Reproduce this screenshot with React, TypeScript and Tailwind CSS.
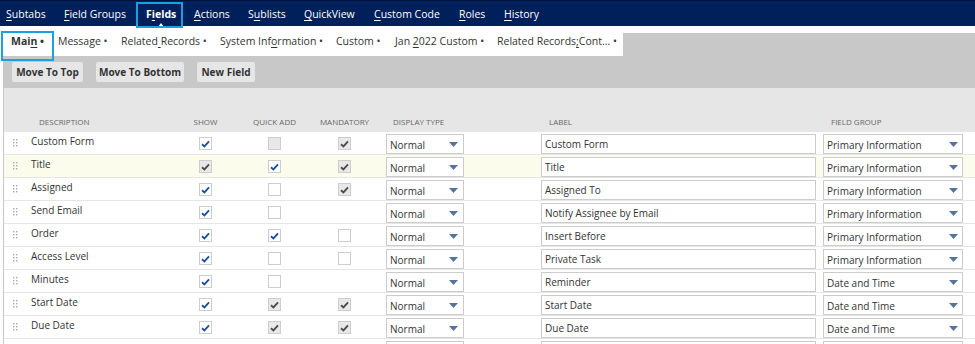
import React from 'react';

type CB = 'blue' | 'gray' | 'dis' | 'empty' | 'none';

function Check({ v }: { v: CB }) {
  if (v === 'none') return <div className="w-[13px] h-[13px]" />;
  const bg = v === 'gray' || v === 'dis' ? 'bg-[#e8e8e8]' : 'bg-white';
  return (
    <div className={`w-[13px] h-[13px] border border-[#cdcdcd] ${bg} flex items-center justify-center`}>
      {(v === 'blue' || v === 'gray') && (
        <svg width="9" height="8" viewBox="0 0 9 8">
          <path
            d="M1 4.3 L3.4 6.4 L8 1.4"
            fill="none"
            stroke={v === 'blue' ? '#1d4d9b' : '#4a4a4a'}
            strokeWidth="1.8"
          />
        </svg>
      )}
    </div>
  );
}

function Arrow() {
  return (
    <svg width="9" height="5" viewBox="0 0 9 5">
      <path d="M0 0 H9 L4.5 5 Z" fill="#56739c" />
    </svg>
  );
}

function Select({ text, wide }: { text: string; wide?: boolean }) {
  return (
    <div
      className={`h-[20px] border border-[#cccccc] bg-white flex items-center justify-between pl-[3px] ${
        wide ? 'w-[140px] pr-[4px]' : 'w-[78px] pr-[5px]'
      }`}
    >
      <span className="text-[10px] leading-[12px] text-[#333] pt-[1px]">{text}</span>
      <Arrow />
    </div>
  );
}

function Handle() {
  return (
    <svg width="5" height="8" viewBox="0 0 5 8">
      {[0, 3].map((x) =>
        [0, 3, 6].map((y) => <rect key={`${x}-${y}`} x={x} y={y} width="1.4" height="1.4" fill="#a8a8a8" />)
      )}
    </svg>
  );
}

type Row = {
  d: string;
  s: CB;
  q: CB;
  m: CB;
  label: string;
  fg: string;
  hl?: boolean;
  sel?: string;
};

const rows: Row[] = [
  { d: 'Custom Form', s: 'blue', q: 'dis', m: 'gray', label: 'Custom Form', fg: 'Primary Information' },
  { d: 'Title', s: 'gray', q: 'blue', m: 'gray', label: 'Title', fg: 'Primary Information', hl: true },
  { d: 'Assigned', s: 'blue', q: 'empty', m: 'gray', label: 'Assigned To', fg: 'Primary Information' },
  { d: 'Send Email', s: 'blue', q: 'empty', m: 'none', label: 'Notify Assignee by Email', fg: 'Primary Information' },
  { d: 'Order', s: 'blue', q: 'blue', m: 'empty', label: 'Insert Before', fg: 'Primary Information' },
  { d: 'Access Level', s: 'blue', q: 'empty', m: 'empty', label: 'Private Task', fg: 'Primary Information' },
  { d: 'Minutes', s: 'blue', q: 'empty', m: 'none', label: 'Reminder', fg: 'Date and Time' },
  { d: 'Start Date', s: 'blue', q: 'gray', m: 'gray', label: 'Start Date', fg: 'Date and Time' },
  { d: 'Due Date', s: 'blue', q: 'gray', m: 'gray', label: 'Due Date', fg: 'Date and Time' },
  { d: '', s: 'blue', q: 'gray', m: 'empty', label: '', fg: '', sel: '' },
];

function U({ c }: { c: string }) {
  return <span className="underline underline-offset-[2px] decoration-[1px]">{c}</span>;
}

export default function App() {
  return (
    <div className="w-[975px] h-[344px] overflow-hidden bg-white font-['Open_Sans',sans-serif] text-[#333]">
      {/* top nav */}
      <div className="relative h-[26px] bg-[#00205b] border-t border-[#00123a] flex items-center pl-[6px] text-white text-[10.5px] leading-[14px]">
        <span className="w-[58px]"><U c="S" />ubtabs</span>
        <span className="w-[82px]"><U c="F" />ield Groups</span>
        <span className="w-[48px] relative font-bold">
          F<U c="i" />elds
          <span className="absolute left-[12px] top-[16px] w-0 h-0 border-l-[3px] border-r-[3px] border-b-[4px] border-l-transparent border-r-transparent border-b-white" />
          <span className="absolute left-[-10px] top-[-5px] w-[47px] h-[26px] border-[2.5px] border-[#1a9fe0]" />
        </span>
        <span className="w-[54px]"><U c="A" />ctions</span>
        <span className="w-[56px]">S<U c="u" />blists</span>
        <span className="w-[70px]"><U c="Q" />uickView</span>
        <span className="w-[85px]"><U c="C" />ustom Code</span>
        <span className="w-[45px]"><U c="R" />oles</span>
        <span><U c="H" />istory</span>
      </div>

      <div className="pl-[3px]">
        {/* subtabs */}
        <div className="relative h-[30px] flex">
          <div className="w-[620px] flex items-center pl-[8px] text-[10.5px] leading-[14px] text-[#333]">
            <span className="w-[47px] font-bold">Mai<U c="n" /> •</span>
            <span className="w-[63px]">Message •</span>
            <span className="w-[99px]">Related<U c=" " />Records •</span>
            <span className="w-[116px]">System Inf<U c="o" />rmation •</span>
            <span className="w-[59px]">Custom •</span>
            <span className="w-[102px]">Jan <U c="2" />022 Custom •</span>
            <span>Related Records<U c=";" />Cont... •</span>
          </div>
          <div className="flex-1 mt-[7px] bg-[#c8c8c8]" />
          <div className="absolute left-[-2px] top-[5px] w-[53px] h-[30px] border-[2.5px] border-[#1a9fe0]" />
        </div>

        {/* button bar */}
        <div className="h-[32px] bg-[#c8c8c8] flex items-start pt-[6px] pl-[9px] gap-[13px]">
          <div className="w-[71px] h-[20px] bg-[#e6e6e6] rounded-[2px] flex items-center justify-center text-[10px] font-bold text-[#333]">Move To Top</div>
          <div className="w-[88px] h-[20px] bg-[#e6e6e6] rounded-[2px] flex items-center justify-center text-[10px] font-bold text-[#333]">Move To Bottom</div>
          <div className="w-[58px] h-[20px] bg-[#e6e6e6] rounded-[2px] flex items-center justify-center text-[10px] font-bold text-[#333]">New Field</div>
        </div>

        {/* table */}
        <div className="border-l border-[#c8c8c8]">
          <div className="h-[44px] bg-[#e6e6e6] flex items-end pb-[5px] text-[8px] leading-[10px] text-[#666666] uppercase whitespace-nowrap">
            <div className="w-[27px]" />
            <div className="w-[168px] pl-[8px]">Description</div>
            <div className="w-[69px]"><div className="w-[13px] flex justify-center">Show</div></div>
            <div className="w-[70px]"><div className="w-[13px] flex justify-center">Quick Add</div></div>
            <div className="w-[48px]"><div className="w-[13px] flex justify-center">Mandatory</div></div>
            <div className="w-[155px] pl-[7px]">Display Type</div>
            <div className="w-[282px] pl-[8px]">Label</div>
            <div className="w-[140px] pl-[8px]">Field Group</div>
          </div>

          {rows.map((r, i) => (
            <div
              key={i}
              className={`h-[23px] border-b border-[#e6e6e6] flex items-start ${r.hl ? 'bg-[#fcfcec]' : 'bg-white'}`}
            >
              <div className="w-[27px] pl-[9px] pt-[7px]">
                <Handle />
              </div>
              <div className="w-[168px] pt-[2px] text-[10px] leading-[14px] text-[#333]">{r.d}</div>
              <div className="w-[69px] pt-[5px]"><Check v={r.s} /></div>
              <div className="w-[70px] pt-[5px]"><Check v={r.q} /></div>
              <div className="w-[48px] pt-[5px]"><Check v={r.m} /></div>
              <div className="w-[155px] pt-[2px]"><Select text={r.sel ?? 'Normal'} /></div>
              <div className="w-[282px] pt-[2px]">
                <div className="w-[275px] h-[20px] border border-[#cccccc] bg-white flex items-center pl-[3px] text-[10px] leading-[12px] text-[#333]">
                  {r.label}
                </div>
              </div>
              <div className="w-[140px] pt-[2px]"><Select text={r.fg} wide /></div>
            </div>
          ))}
        </div>
      </div>
    </div>
  );
}
